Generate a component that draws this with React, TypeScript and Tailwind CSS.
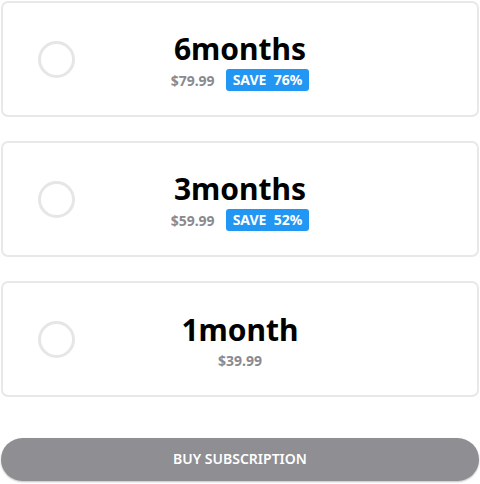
import React from "react";

const plans = [
  { title: "6months", price: "$79.99", save: "76%" },
  { title: "3months", price: "$59.99", save: "52%" },
  { title: "1month", price: "$39.99", save: null as string | null },
];

export default function App() {
  return (
    <div
      className="w-[480px] h-[484px] bg-white overflow-hidden pt-px px-px"
      style={{ fontFamily: '"Noto Sans", "Open Sans", sans-serif' }}
    >
      <div className="flex flex-col gap-[24px]">
        {plans.map((p) => (
          <div
            key={p.title}
            className="h-[116px] border-2 border-[#e8e8e8] rounded-[7px] grid grid-cols-[36px_1fr_36px] items-center px-[35px]"
          >
            <div className="w-[37px] h-[37px] rounded-full border-[3px] border-[#e6e6e6]" />
            <div className="flex flex-col items-center pt-[4px]">
              <div className="text-[30px] leading-[36px] font-bold text-black">{p.title}</div>
              <div className="flex items-center gap-[11px] mt-[2px]">
                <span className="text-[14px] font-bold text-[#8a8a8e]">{p.price}</span>
                {p.save && (
                  <span className="bg-[#2196f3] text-white text-[14px] font-bold h-[22px] leading-[22px] px-[7px] rounded-[3px] whitespace-pre">
                    {"SAVE  " + p.save}
                  </span>
                )}
              </div>
            </div>
            <div />
          </div>
        ))}
      </div>
      <div className="mt-[41px] h-[43px] rounded-full bg-[#8e8e93] flex items-center justify-center text-white text-[14px] font-semibold pb-[3px] shadow-[0_1px_2px_rgba(0,0,0,0.25)]">
        BUY SUBSCRIPTION
      </div>
    </div>
  );
}
